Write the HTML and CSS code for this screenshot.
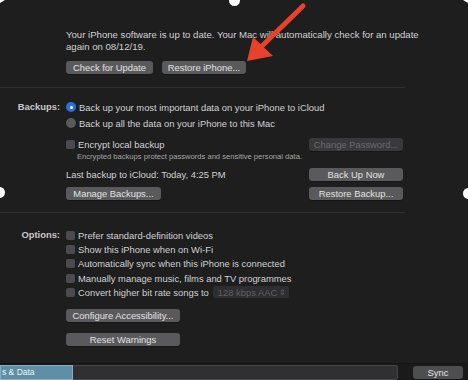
FILE: index.html
```html
<!DOCTYPE html>
<html>
<head>
<meta charset="utf-8">
<link rel="stylesheet" href="styles.css">
</head>
<body>
<div class="window">
  <section class="update">
    <p class="info">Your iPhone software is up to date. Your Mac will automatically check for an update<br>again on 08/12/19.</p>
    <div class="btnrow">
      <button class="btn b-check">Check for Update</button>
      <button class="btn b-restore">Restore iPhone...</button>
    </div>
  </section>
  <div class="sep"></div>
  <section class="block backups">
    <div class="lab">Backups:</div>
    <div class="content">
      <div class="row r16"><span class="radio on"></span>Back up your most important data on your iPhone to iCloud</div>
      <div class="row r16"><span class="radio"></span>Back up all the data on your iPhone to this Mac</div>
      <div class="row split enc"><span class="line"><span class="check"></span>Encrypt local backup</span><button class="btn wide disabled">Change Password...</button></div>
      <div class="row note">Encrypted backups protect passwords and sensitive personal data.</div>
      <div class="row split last"><span class="line">Last backup to iCloud: Today, 4:25 PM</span><button class="btn wide">Back Up Now</button></div>
      <div class="row split manage"><button class="btn b-manage">Manage Backups...</button><button class="btn wide">Restore Backup...</button></div>
    </div>
  </section>
  <div class="sep sep2"></div>
  <section class="block options">
    <div class="lab">Options:</div>
    <div class="content">
      <div class="row r14"><span class="check"></span>Prefer standard-definition videos</div>
      <div class="row r14"><span class="check"></span>Show this iPhone when on Wi-Fi</div>
      <div class="row r14"><span class="check"></span>Automatically sync when this iPhone is connected</div>
      <div class="row r14"><span class="check"></span>Manually manage music, films and TV programmes</div>
      <div class="row r14"><span class="check"></span>Convert higher bit rate songs to <span class="select">128 kbps AAC<span class="updown">&#8661;</span></span></div>
      <button class="btn b-acc">Configure Accessibility...</button>
      <button class="btn b-reset">Reset Warnings</button>
    </div>
  </section>
  <footer class="bottom">
    <div class="usage">
      <div class="seg-data">s &amp; Data</div>
      <div class="seg-free"></div>
    </div>
    <button class="btn sync">Sync</button>
  </footer>

  <svg class="arrow" width="468" height="380" viewBox="0 0 468 380">
    <line x1="303" y1="6" x2="262" y2="46" stroke="#e8412c" stroke-width="5" stroke-linecap="round"/>
    <polygon points="247,61 253,37 273,56" fill="#e8412c"/>
  </svg>
  <span class="handle h-top"></span>
  <span class="handle h-left"></span>
  <span class="handle h-right"></span>
  <span class="corner c-tl"></span>
  <span class="corner c-tr"></span>
</div>
</body>
</html>
```

FILE: styles.css
```css
* { box-sizing: border-box; }
html, body { margin: 0; padding: 0; }
body {
  width: 468px;
  height: 380px;
  overflow: hidden;
  background: #1e1e1f;
  font-family: "Liberation Sans", Arial, sans-serif;
  font-size: 9.4px;
  color: #d2d2d2;
}
.window {
  position: relative;
  width: 468px;
  height: 380px;
  padding-top: 29px;
}
.update { padding-left: 66px; }
.info {
  margin: 0;
  line-height: 12px;
  font-size: 9.6px;
}
.btnrow {
  display: flex;
  gap: 9px;
  margin-top: 8px;
}
.btn {
  font-family: inherit;
  font-size: 9.4px;
  color: #e2e2e2;
  background: #5a5a5c;
  border: none;
  border-radius: 3px;
  height: 13px;
  padding: 0;
  line-height: 13px;
  text-align: center;
  box-shadow: 0 0.5px 0 rgba(0,0,0,0.5);
}
.b-check { width: 87px; }
.b-restore { width: 84px; }
.sep {
  width: 405px;
  height: 1px;
  background: #2f2f31;
  margin-top: 13px;
}
.sep2 { margin-top: 12px; }
.block {
  display: flex;
}
.lab {
  width: 60px;
  margin-right: 6px;
  text-align: right;
  font-weight: bold;
  color: #c9c9c9;
  line-height: 16px;
}
.content {
  width: 337px;
  display: flex;
  flex-direction: column;
}
.backups { margin-top: 11px; }
.row {
  display: flex;
  align-items: center;
  white-space: nowrap;
}
.r16 { height: 16px; }
.r14 { height: 14.3px; }
.split { justify-content: space-between; }
.line { display: flex; align-items: center; }
.enc { margin-top: 6px; height: 14px; }
.note {
  height: 11px;
  font-size: 7.6px;
  color: #a6a6a6;
  padding-left: 11px;
}
.last { margin-top: 6px; height: 13px; }
.manage { margin-top: 6px; height: 13px; }
.wide { width: 94px; }
.b-manage { width: 95px; }
.disabled {
  background: #39393b;
  color: #69696b;
}
.radio {
  width: 10px;
  height: 10px;
  border-radius: 50%;
  background: #5a5a5c;
  margin-right: 3px;
  flex: none;
}
.radio.on {
  background: #2d6fd8;
  position: relative;
}
.radio.on::after {
  content: "";
  position: absolute;
  left: 3.5px;
  top: 3.5px;
  width: 3px;
  height: 3px;
  border-radius: 50%;
  background: #fff;
}
.check {
  width: 9px;
  height: 9px;
  border-radius: 2px;
  background: #4b4b4d;
  margin-right: 3px;
  flex: none;
}
.options { margin-top: 15px; }
.options .lab { line-height: 14px; }
.select {
  display: inline-flex;
  align-items: center;
  justify-content: space-between;
  width: 76px;
  height: 12px;
  margin-left: 4px;
  padding: 0 3px 0 5px;
  background: #2e2e30;
  border-radius: 2px;
  color: #5e5e60;
}
.updown { font-size: 8px; }
.b-acc { width: 114px; margin-top: 10px; }
.b-reset { width: 114px; margin-top: 11px; }
.bottom {
  position: absolute;
  left: 0;
  right: 0;
  bottom: 0;
  height: 17px;
  background: #1a1a1b;
  border-top: 1px solid #151515;
  display: flex;
  align-items: center;
}
.usage {
  display: flex;
  width: 398px;
  height: 15px;
  margin-top: 1px;
}
.seg-data {
  width: 73px;
  background: #5f8ea7;
  border: 1px solid #86aec2;
  color: #eef3f6;
  font-size: 8.5px;
  line-height: 13px;
  padding-left: 1px;
}
.seg-free {
  flex: 1;
  background: #303032;
  border: 1px solid #474749;
  border-left: none;
  border-radius: 0 3px 3px 0;
}
.sync {
  width: 50px;
  margin-left: 15px;
  margin-top: 1px;
  background: #4e4e50;
}
.arrow {
  position: absolute;
  left: 0;
  top: 0;
  pointer-events: none;
}
.handle {
  position: absolute;
  width: 11px;
  height: 11px;
  border-radius: 50%;
  background: #fff;
}
.h-top { left: 229px; top: -5px; }
.h-left { left: -6px; top: 187px; }
.h-right { left: 463px; top: 188px; }
.corner {
  position: absolute;
  top: 0;
  width: 5px;
  height: 3px;
  background: #fff;
}
.c-tl { left: 0; clip-path: polygon(0 0, 100% 0, 0 100%); }
.c-tr { right: 0; clip-path: polygon(0 0, 100% 0, 100% 100%); }
```
